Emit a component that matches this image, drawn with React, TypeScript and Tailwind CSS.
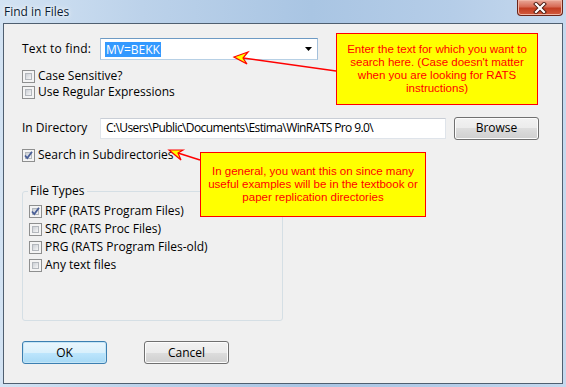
import React from "react";

function Check({ checked = false }: { checked?: boolean }) {
  return (
    <span className="relative w-[13px] h-[13px] shrink-0 border border-[#8e8f8f] bg-[#f4f4f4] p-[2px] flex">
      <span className="flex-1 border border-[#b3b7bc] bg-[linear-gradient(135deg,#cbcfd5,#f6f6f6)]" />
      {checked && (
        <svg className="absolute left-0 top-0" width="11" height="11" viewBox="0 0 11 11">
          <path d="M2 5.5 L4.3 8 L9 1.8" stroke="#4a5f97" strokeWidth="1.8" fill="none" />
        </svg>
      )}
    </span>
  );
}

function CheckRow({ label, checked = false, h = "h-[16px]" }: { label: string; checked?: boolean; h?: string }) {
  return (
    <div className={`flex items-center ${h}`}>
      <Check checked={checked} />
      <span className="ml-[3px]">{label}</span>
    </div>
  );
}

function Button({ label, def = false }: { label: string; def?: boolean }) {
  return (
    <div
      className={
        def
          ? "w-[85px] h-[23px] rounded-[3px] border border-[#3c7fb1] bg-[linear-gradient(180deg,#eaf6fd_0%,#d9f0fc_50%,#bee6fd_50%,#a7d9f5_100%)] flex items-center justify-center shadow-[inset_0_0_0_1px_#c4e5f6]"
          : "w-[85px] h-[23px] rounded-[3px] border border-[#707070] bg-[linear-gradient(180deg,#f2f2f2_0%,#ebebeb_50%,#dddddd_50%,#cfcfcf_100%)] flex items-center justify-center shadow-[inset_0_0_0_1px_#fcfcfc]"
      }
    >
      {label}
    </div>
  );
}

export default function App() {
  return (
    <div
      className="relative w-[566px] h-[387px] overflow-hidden bg-[linear-gradient(90deg,#d3e3f3_0%,#bcd2ea_25%,#a9c5e3_55%,#b5cde8_80%,#c6d9ee_100%)] text-[12px] text-black"
      style={{ fontFamily: '"Open Sans", "Noto Sans", sans-serif' }}
    >
      {/* title bar */}
      <div className="h-[23px] flex items-center pl-[4px]">
        <span className="text-[#0b1c33] [text-shadow:0_0_6px_#ffffff,0_0_3px_#ffffff]">Find in Files</span>
      </div>
      {/* close button */}
      <div className="absolute right-[3px] top-0 w-[46px] h-[16px] rounded-b-[4px] border border-t-0 border-[#6b2418] bg-[linear-gradient(180deg,#e9a898_0%,#d76a55_45%,#c23d22_55%,#d25a3e_100%)] flex items-center justify-center shadow-[inset_0_0_0_1px_#f0b4a4]">
        <svg width="14" height="12" viewBox="0 0 14 12">
          <path d="M3 2 L11 10 M11 2 L3 10" stroke="#4b1a10" strokeWidth="4" strokeLinecap="square" />
          <path d="M3 2 L11 10 M11 2 L3 10" stroke="#ffffff" strokeWidth="2.2" strokeLinecap="square" />
        </svg>
      </div>

      {/* client area */}
      <div className="mx-[3px] h-[361px] border border-[#4f5f70] bg-[#f0f0f0]">
        <div className="pl-[18px] pt-[14px]">
          <div className="flex items-center h-[22px]">
            <span className="w-[78px] tracking-[0.2px]">Text to find:</span>
            <div className="w-[218px] h-[22px] border border-[#6d9ac4] border-b-[#b7d0e5] border-l-[#a4c0db] border-r-[#a4c0db] bg-white flex items-center pl-[4px] pr-[5px]">
              <span className="bg-[#3399ff] text-white leading-[15px] px-[1px]">MV=BEKK</span>
              <span className="flex-1" />
              <svg width="7" height="4" viewBox="0 0 7 4">
                <path d="M0 0 L7 0 L3.5 4 Z" fill="#000" />
              </svg>
            </div>
          </div>
          <div className="mt-[8px]">
            <CheckRow label="Case Sensitive?" />
            <CheckRow label="Use Regular Expressions" />
          </div>
          <div className="mt-[17px] flex items-center h-[22px]">
            <span className="w-[78px]">In Directory</span>
            <div className="w-[346px] h-[21px] border border-[#dfe4ea] border-t-[#c9ced6] bg-white flex items-center pl-[5px] tracking-[-0.6px]">
              C:\Users\Public\Documents\Estima\WinRATS Pro 9.0\
            </div>
            <div className="ml-[8px]">
              <Button label="Browse" />
            </div>
          </div>
          <div className="mt-[8px]">
            <CheckRow label="Search in Subdirectories" checked />
          </div>
          <fieldset className="mt-[19px] w-[261px] h-[139px] border border-[#d5dfe5] rounded-[3px] pl-[6px] pt-[2px]">
            <legend className="ml-[-1px] px-[2px]">File Types</legend>
            <CheckRow label="RPF (RATS Program Files)" checked h="h-[18px]" />
            <CheckRow label="SRC (RATS Proc Files)" h="h-[18px]" />
            <CheckRow label="PRG (RATS Program Files-old)" h="h-[18px]" />
            <CheckRow label="Any text files" h="h-[18px]" />
          </fieldset>
          <div className="mt-[20px] flex gap-[37px]">
            <Button label="OK" def />
            <Button label="Cancel" />
          </div>
        </div>
      </div>

      {/* callout 1 */}
      <div
        className="absolute left-[336px] top-[33px] w-[202px] h-[72px] border border-[#ff0000] bg-[#ffff00] text-[#ff0000] text-[11.5px] leading-[13px] text-center pt-[9px]"
        style={{ fontFamily: '"Liberation Sans", Arial, sans-serif' }}
      >
        Enter the text for which you want to
        <br />
        search here. (Case doesn't matter
        <br />
        when you are looking for RATS
        <br />
        instructions)
      </div>
      {/* callout 2 */}
      <div
        className="absolute left-[200px] top-[152px] w-[226px] h-[65px] border border-[#ff0000] bg-[#ffff00] text-[#ff0000] text-[11.5px] leading-[13px] text-center pt-[12px]"
        style={{ fontFamily: '"Liberation Sans", Arial, sans-serif' }}
      >
        In general, you want this on since many
        <br />
        useful examples will be in the textbook or
        <br />
        paper replication directories
      </div>

      {/* arrows */}
      <svg className="absolute left-0 top-0 pointer-events-none" width="566" height="387" viewBox="0 0 566 387">
        <line x1="243" y1="58" x2="336" y2="71" stroke="#ff0000" strokeWidth="1.5" />
        <path d="M234 57 L248 52 L243 58 L247 64 Z" fill="#ffff00" stroke="#ff0000" strokeWidth="1.2" strokeLinejoin="miter" />
        <line x1="178" y1="153" x2="200" y2="160" stroke="#ff0000" strokeWidth="1.5" />
        <path d="M169 150 L183 150 L178 153 L181 160 Z" fill="#ffff00" stroke="#ff0000" strokeWidth="1.2" />
      </svg>
    </div>
  );
}
